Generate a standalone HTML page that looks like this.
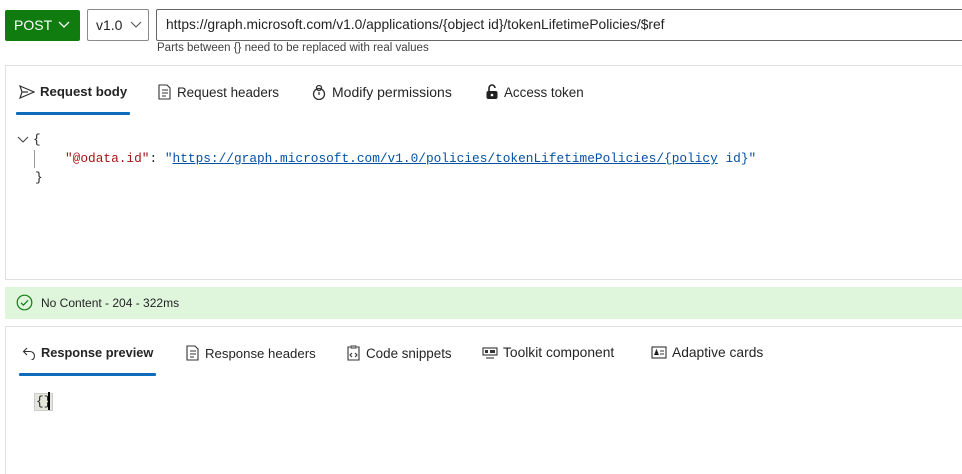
<!DOCTYPE html>
<html style="overflow:hidden;height:474px"><head><style>
*{box-sizing:border-box;margin:0;padding:0}
body{width:962px;height:474px;background:#fff;font-family:"Liberation Sans",sans-serif;font-size:14px;color:#242424;position:relative;overflow:hidden}
.a{position:absolute}
.tab{position:absolute;font-size:13.4px;color:#242424;display:flex;align-items:center;gap:5px;white-space:nowrap}
.mono{font-family:"Liberation Mono",monospace;font-size:12.8px}
</style></head><body>
<div class="a" style="left:5px;top:10px;width:75px;height:31px;background:#107c10;border-radius:2px;color:#fff;font-size:14px;line-height:31px;padding-left:9px">POST
<svg class="a" style="left:53px;top:11px" width="12" height="8" viewBox="0 0 12 8"><path d="M1 1l5 5 5-5" stroke="#fff" stroke-width="1.3" fill="none"/></svg></div>
<div class="a" style="left:87px;top:9px;width:62px;height:32px;border:1px solid #8a8a8a;border-radius:2px;line-height:30px;padding-left:8px">v1.0
<svg class="a" style="left:42px;top:11px" width="12" height="8" viewBox="0 0 12 8"><path d="M1 1l5 5 5-5" stroke="#555" stroke-width="1.1" fill="none"/></svg></div>
<div class="a" style="left:156px;top:9px;width:820px;height:32px;border:1px solid #666;border-radius:2px;line-height:30px;padding-left:9px;font-size:13.8px">https://graph.microsoft.com/v1.0/applications/{object id}/tokenLifetimePolicies/$ref</div>
<div class="a" style="left:157px;top:42px;font-size:11.5px;color:#424242">Parts between {} need to be replaced with real values</div>

<div class="a" style="left:5px;top:65px;width:970px;height:215px;border:1px solid #e0e0e0"></div>
<div class="tab" style="left:19px;top:84px;font-weight:bold;font-size:13.2px"><svg width="16" height="14" viewBox="0 0 16 14"><path d="M1 1l14 6-14 6 2-6z M3 7h6" stroke="#333" stroke-width="1.2" fill="none"/></svg>Request body</div>
<div class="a" style="left:16px;top:112px;width:114px;height:3px;background:#0f6cbd;border-radius:1px"></div>
<div class="tab" style="left:157px;top:84px"><svg width="15" height="16" viewBox="0 0 15 16"><path d="M2 1h8l3 3v11H2z M5 6h6M5 9h6M5 12h4" stroke="#333" stroke-width="1.1" fill="none"/></svg>Request headers</div>
<div class="tab" style="left:311px;top:84px;font-size:14px"><svg width="16" height="16" viewBox="0 0 16 16"><circle cx="8" cy="10" r="5.5" stroke="#333" stroke-width="1.3" fill="none"/><circle cx="8" cy="4" r="2.5" stroke="#333" stroke-width="1.3" fill="none"/><path d="M8 8v3" stroke="#333" stroke-width="1.3"/></svg>Modify permissions</div>
<div class="tab" style="left:485px;top:84px"><svg width="14" height="16" viewBox="0 0 14 16"><path d="M4 7V4a3 3 0 016 0" stroke="#222" stroke-width="1.6" fill="none"/><rect x="1.5" y="7" width="11" height="8" rx="2" fill="#222"/><circle cx="7" cy="11" r="1.3" fill="#fff"/></svg>Access token</div>

<svg class="a" style="left:17px;top:136px" width="12" height="8" viewBox="0 0 12 8"><path d="M1 1l5 5 5-5" stroke="#444" stroke-width="1.1" fill="none"/></svg>
<div class="a mono" style="left:33px;top:132px">{</div>
<div class="a" style="left:34px;top:150px;width:1px;height:18px;background:#999"></div>
<div class="a mono" style="left:65px;top:151px;white-space:pre"><span style="color:#a31515">"@odata.id"</span>: <span style="color:#0451a5">"<span style="text-decoration:underline">https://graph.microsoft.com/v1.0/policies/tokenLifetimePolicies/{policy</span> id}"</span></div>
<div class="a mono" style="left:35px;top:170px">}</div>

<div class="a" style="left:5px;top:287px;width:970px;height:32px;background:#dff6dd"></div>
<svg class="a" style="left:16px;top:294px" width="17" height="17" viewBox="0 0 17 17"><circle cx="8.5" cy="8.5" r="7.3" stroke="#107c10" stroke-width="1.2" fill="none"/><path d="M5 8.8l2.4 2.4L12 6.3" stroke="#107c10" stroke-width="1.2" fill="none"/></svg>
<div class="a" style="left:41px;top:296px;font-size:12px">No Content - 204 - 322ms</div>

<div class="a" style="left:5px;top:326px;width:970px;height:150px;border:1px solid #e0e0e0;border-bottom:none"></div>
<div class="tab" style="left:22px;top:345px;font-weight:bold;font-size:12.8px"><svg width="14" height="14" viewBox="0 0 14 14"><path d="M5 2L1.5 5.5 5 9 M1.5 5.5H8a4.5 4.5 0 010 9" stroke="#333" stroke-width="1.1" fill="none"/></svg>Response preview</div>
<div class="a" style="left:19px;top:373px;width:137px;height:3px;background:#0f6cbd;border-radius:1px"></div>
<div class="tab" style="left:185px;top:345px;font-size:13.2px"><svg width="15" height="16" viewBox="0 0 15 16"><path d="M2 1h8l3 3v11H2z M5 6h6M5 9h6M5 12h4" stroke="#333" stroke-width="1.1" fill="none"/></svg>Response headers</div>
<div class="tab" style="left:346px;top:345px"><svg width="15" height="16" viewBox="0 0 15 16"><path d="M4 2H2v13h11V2h-2 M5 1h5v2H5z M6 8l-2 2 2 2M9 8l2 2-2 2" stroke="#333" stroke-width="1.1" fill="none"/></svg>Code snippets</div>
<div class="tab" style="left:482px;top:345px;font-size:13.8px"><svg width="16" height="14" viewBox="0 0 16 14"><rect x="1" y="2" width="14" height="7" stroke="#333" stroke-width="1.1" fill="none"/><rect x="3" y="4" width="3" height="3" fill="#333"/><rect x="8" y="4" width="5" height="3" fill="#333"/><path d="M4 12h8" stroke="#333" stroke-width="1.1"/></svg>Toolkit component</div>
<div class="tab" style="left:651px;top:345px;font-size:13.8px"><svg width="16" height="13" viewBox="0 0 16 13"><rect x="1" y="1" width="14" height="11" stroke="#333" stroke-width="1.1" fill="none"/><path d="M3.5 9l2-5 2 5M4.3 7.5h2.4M9 5h4M9 8h4" stroke="#333" stroke-width="1"/></svg>Adaptive cards</div>

<div class="a mono" style="left:34px;top:393px;background:#e4e6dc;border:1px solid #ccc;padding:0 1px;line-height:16px">{}</div>
<div class="a" style="left:48px;top:392px;width:2px;height:18px;background:#000"></div>
</body></html>
